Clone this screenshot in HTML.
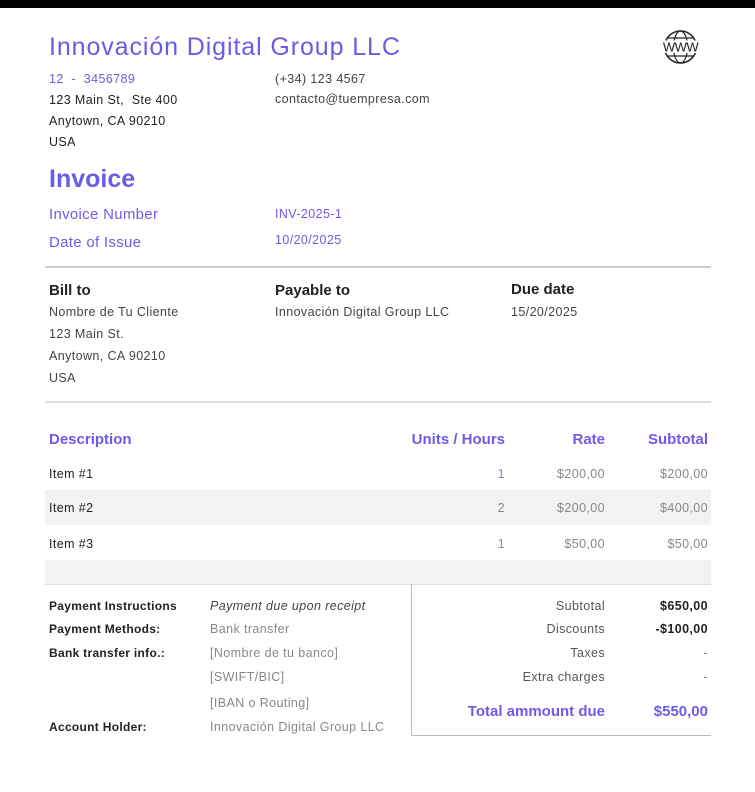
<!DOCTYPE html><html><head><meta charset="utf-8"><style>
body{margin:0;width:755px;height:792px;background:#fff;font-family:"Liberation Sans",sans-serif;position:relative;overflow:hidden;color:#222}
.a{position:absolute;white-space:nowrap}
.p{color:#6b5ce7}
.s{font-size:12.5px;letter-spacing:0.4px}
.g{color:#888}
.b{font-weight:bold}
.r{text-align:right}
</style></head><body>
<div class="a" style="left:0;top:0;width:755px;height:8px;background:#000"></div>
<div class="a p" style="left:49px;top:33px;font-size:25px;letter-spacing:0.9px">Innovación Digital Group LLC</div>
<svg class="a" style="left:662px;top:29px" width="37" height="36" viewBox="0 0 37 36"><circle cx="18.5" cy="18" r="16" fill="none" stroke="#222" stroke-width="1.5"/><ellipse cx="18.5" cy="18" rx="7" ry="16" fill="none" stroke="#222" stroke-width="1.2"/><line x1="5" y1="9" x2="32" y2="9" stroke="#222" stroke-width="1.2"/><line x1="5" y1="27" x2="32" y2="27" stroke="#222" stroke-width="1.2"/><rect x="1" y="11.5" width="35" height="12.5" fill="#fff"/><text x="18.5" y="22.5" font-size="13" text-anchor="middle" font-family="Liberation Sans" fill="#222" letter-spacing="-0.5">WWW</text></svg>
<div class="a p s" style="left:49px;top:72px">12 &nbsp;- &nbsp;3456789</div>
<div class="a s" style="left:49px;top:93px">123 Main St, &nbsp;Ste 400</div>
<div class="a s" style="left:49px;top:114px">Anytown, CA 90210</div>
<div class="a s" style="left:49px;top:135px">USA</div>
<div class="a s" style="left:275px;top:72px;color:#444">(+34) 123 4567</div>
<div class="a s" style="left:275px;top:92px;color:#444">contacto@tuempresa.com</div>
<div class="a p b" style="left:49px;top:165px;font-size:25px">Invoice</div>
<div class="a p" style="left:49px;top:206px;font-size:15px;letter-spacing:0.3px">Invoice Number</div>
<div class="a p" style="left:49px;top:234px;font-size:15px;letter-spacing:0.3px">Date of Issue</div>
<div class="a p s" style="left:275px;top:207px">INV-2025-1</div>
<div class="a p s" style="left:275px;top:233px">10/20/2025</div>
<div class="a" style="left:45px;top:266px;width:666px;height:2px;background:#ccc"></div>
<div class="a b" style="left:49px;top:282px;font-size:15px">Bill to</div>
<div class="a b" style="left:275px;top:282px;font-size:15px">Payable to</div>
<div class="a b" style="left:511px;top:281px;font-size:15px">Due date</div>
<div class="a s" style="left:49px;top:305px;color:#444">Nombre de Tu Cliente</div>
<div class="a s" style="left:49px;top:327px;color:#444">123 Main St.</div>
<div class="a s" style="left:49px;top:349px;color:#444">Anytown, CA 90210</div>
<div class="a s" style="left:49px;top:371px;color:#444">USA</div>
<div class="a s" style="left:275px;top:305px;color:#444">Innovación Digital Group LLC</div>
<div class="a s" style="left:511px;top:305px;color:#444">15/20/2025</div>
<div class="a" style="left:45px;top:401px;width:666px;height:2px;background:#ddd"></div>
<div class="a p b" style="left:49px;top:431px;font-size:15px">Description</div>
<div class="a p b r" style="left:380px;width:125px;top:431px;font-size:15px">Units / Hours</div>
<div class="a p b r" style="left:520px;width:85px;top:431px;font-size:15px">Rate</div>
<div class="a p b r" style="left:620px;width:88px;top:431px;font-size:15px">Subtotal</div>
<div class="a" style="left:45px;top:490px;width:666px;height:35px;background:#f2f2f2"></div>
<div class="a" style="left:45px;top:560px;width:666px;height:24px;background:#f2f2f2"></div>
<div class="a s" style="left:49px;top:467px">Item #1</div>
<div class="a s" style="left:49px;top:501px">Item #2</div>
<div class="a s" style="left:49px;top:537px">Item #3</div>
<div class="a s r g" style="left:450px;width:55px;top:467px;color:#8a7fd0">1</div>
<div class="a s r g" style="left:450px;width:55px;top:501px">2</div>
<div class="a s r g" style="left:450px;width:55px;top:537px;color:#8a7fd0">1</div>
<div class="a s r g" style="left:520px;width:85px;top:467px">$200,00</div>
<div class="a s r g" style="left:520px;width:85px;top:501px">$200,00</div>
<div class="a s r g" style="left:520px;width:85px;top:537px">$50,00</div>
<div class="a s r g" style="left:620px;width:88px;top:467px">$200,00</div>
<div class="a s r g" style="left:620px;width:88px;top:501px">$400,00</div>
<div class="a s r g" style="left:620px;width:88px;top:537px">$50,00</div>
<div class="a" style="left:45px;top:584px;width:666px;height:1px;background:#ddd"></div>
<div class="a" style="left:411px;top:584px;width:1px;height:152px;background:#bbb"></div>
<div class="a" style="left:411px;top:735px;width:300px;height:1px;background:#bbb"></div>
<div class="a b" style="left:49px;top:599px;font-size:12px;letter-spacing:0.3px">Payment Instructions</div>
<div class="a b" style="left:49px;top:622px;font-size:12px;letter-spacing:0.3px">Payment Methods:</div>
<div class="a b" style="left:49px;top:646px;font-size:12px;letter-spacing:0.3px">Bank transfer info.:</div>
<div class="a b" style="left:49px;top:720px;font-size:12px;letter-spacing:0.3px">Account Holder:</div>
<div class="a s" style="left:210px;top:599px;font-style:italic;color:#444">Payment due upon receipt</div>
<div class="a s g" style="left:210px;top:622px">Bank transfer</div>
<div class="a s g" style="left:210px;top:646px">[Nombre de tu banco]</div>
<div class="a s g" style="left:210px;top:670px">[SWIFT/BIC]</div>
<div class="a s g" style="left:210px;top:696px">[IBAN o Routing]</div>
<div class="a s g" style="left:210px;top:720px">Innovación Digital Group LLC</div>
<div class="a s r" style="left:480px;width:125px;top:599px;color:#555">Subtotal</div>
<div class="a s r" style="left:480px;width:125px;top:622px;color:#555">Discounts</div>
<div class="a s r" style="left:480px;width:125px;top:646px;color:#555">Taxes</div>
<div class="a s r" style="left:480px;width:125px;top:670px;color:#555">Extra charges</div>
<div class="a s r b" style="left:620px;width:88px;top:599px">$650,00</div>
<div class="a s r b" style="left:620px;width:88px;top:622px">-$100,00</div>
<div class="a s r g" style="left:620px;width:88px;top:646px">-</div>
<div class="a s r g" style="left:620px;width:88px;top:670px">-</div>
<div class="a p b r" style="left:420px;width:185px;top:703px;font-size:15px">Total ammount due</div>
<div class="a p b r" style="left:620px;width:88px;top:703px;font-size:15px">$550,00</div>
</body></html>
